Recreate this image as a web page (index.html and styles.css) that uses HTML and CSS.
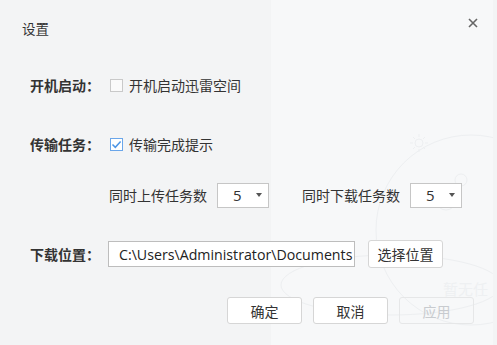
FILE: index.html
```html
<!DOCTYPE html>
<html lang="zh-CN">
<head>
<meta charset="utf-8">
<title>设置</title>
<link rel="stylesheet" href="styles.css">
</head>
<body>
<div class="dialog">
  <div class="backdrop" aria-hidden="true">
    <svg width="222" height="345" viewBox="0 0 222 345">
      <g fill="none" stroke="#edeff1" stroke-width="1">
        <g transform="translate(148 143)">
          <circle r="4"/>
          <path d="M0 -9V-6M0 6V9M-9 0H-6M6 0H9M-6 -6L-4 -4M4 4L6 6M-6 6L-4 4M4 -4L6 -6"/>
        </g>
        <circle cx="200" cy="230" r="95"/>
        <circle cx="175" cy="200" r="10"/>
        <circle cx="190" cy="180" r="6"/>
        <ellipse cx="120" cy="285" rx="110" ry="30"/>
      </g>
    </svg>
    <span class="ghost">暂无任</span>
  </div>

  <header class="titlebar">
    <span class="title">设置</span>
    <button class="close" aria-label="关闭">
      <svg width="10" height="10" viewBox="0 0 10 10"><path d="M1 1L9 9M9 1L1 9" stroke="#666" stroke-width="1.6" fill="none"/></svg>
    </button>
  </header>

  <div class="form">
    <div class="row row-boot">
      <span class="label">开机启动：</span>
      <label class="check"><span class="box"></span><span>开机启动迅雷空间</span></label>
    </div>

    <div class="row row-transfer">
      <span class="label">传输任务：</span>
      <label class="check"><span class="box checked"><svg width="11" height="11" viewBox="0 0 11 11"><path d="M1.5 5.5L4.3 8.3L9.6 2.4" stroke="#4d96e6" stroke-width="1.5" fill="none"/></svg></span><span>传输完成提示</span></label>
    </div>

    <div class="row row-count">
      <span class="sub">同时上传任务数</span>
      <span class="select"><span class="val">5</span><span class="arrow"></span></span>
      <span class="sub sub-2">同时下载任务数</span>
      <span class="select"><span class="val">5</span><span class="arrow"></span></span>
    </div>

    <div class="row row-path">
      <span class="label label-path">下载位置：</span>
      <span class="input">C:\Users\Administrator\Documents</span>
      <button class="btn btn-choose">选择位置</button>
    </div>

    <div class="actions">
      <button class="btn">确定</button>
      <button class="btn">取消</button>
      <button class="btn disabled">应用</button>
    </div>
  </div>
</div>
</body>
</html>
```

FILE: styles.css
```css
* { box-sizing: border-box; }
html, body { margin: 0; padding: 0; }
body {
  width: 497px;
  height: 345px;
  overflow: hidden;
  background: #f3f4f5;
  font-family: "Noto Sans CJK SC", "Noto Sans", sans-serif;
  font-size: 14px;
  color: #333;
}
.dialog {
  position: relative;
  width: 497px;
  height: 345px;
}
.backdrop {
  position: absolute;
  left: 271px;
  top: 0;
  width: 222px;
  height: 345px;
  background: #f7f8f9;
  overflow: hidden;
}
.backdrop svg { position: absolute; left: 0; top: 0; }
.ghost {
  position: absolute;
  left: 172px;
  top: 279px;
  font-size: 15px;
  line-height: 20px;
  color: #eef0f2;
  white-space: nowrap;
}
.titlebar {
  position: relative;
  height: 56px;
  display: flex;
  align-items: center;
  justify-content: space-between;
  padding: 0 16px 0 22px;
}
.title { font-size: 13.5px; line-height: 20px; color: #333; }
.close {
  border: 0;
  background: transparent;
  padding: 0;
  width: 16px;
  height: 16px;
  display: flex;
  align-items: center;
  justify-content: center;
  margin-top: -10px;
}
.form {
  position: relative;
  display: flex;
  flex-direction: column;
  padding-left: 30px;
}
.row {
  display: flex;
  align-items: center;
  height: 26px;
}
.row-boot { margin-top: 16px; }
.row-transfer { margin-top: 33px; }
.row-count { margin-top: 25px; padding-left: 79px; }
.row-path { margin-top: 33px; }
.label {
  width: 80px;
  font-weight: bold;
  color: #333;
  line-height: 20px;
}
.label-path { width: 78px; }
.check {
  display: flex;
  align-items: center;
  gap: 6px;
  line-height: 20px;
}
.box {
  width: 13px;
  height: 13px;
  border: 1px solid #c9c9c9;
  background: #fafafa;
  display: flex;
  align-items: center;
  justify-content: center;
}
.box.checked { border-color: #6aa6ea; background: #fff; }
.sub { line-height: 20px; }
.sub-2 { margin-left: 33px; }
.select {
  margin-left: 10px;
  width: 52px;
  height: 25px;
  border: 1px solid #c6c6c6;
  background: #fff;
  display: flex;
  align-items: center;
  padding-left: 15px;
  padding-right: 6px;
}
.val { flex: 1; font-size: 15px; line-height: 20px; font-family: "Open Sans", "Noto Sans", sans-serif; }
.arrow {
  width: 0;
  height: 0;
  border-left: 3.5px solid transparent;
  border-right: 3.5px solid transparent;
  border-top: 4px solid #555;
}
.input {
  width: 247px;
  height: 26px;
  border: 1px solid #bdbdbd;
  background: #fff;
  padding-left: 10px;
  display: flex;
  align-items: center;
  font-family: "Open Sans", "Noto Sans", sans-serif;
  font-size: 14.2px;
  color: #222;
  white-space: nowrap;
  overflow: hidden;
}
.btn {
  width: 75px;
  height: 27px;
  border: 1px solid #d6d6d6;
  border-radius: 3px;
  background: #fff;
  font-family: "Noto Sans CJK SC", sans-serif;
  font-size: 14px;
  color: #333;
  padding: 0;
}
.btn-choose { margin-left: 13px; height: 28px; }
.actions {
  display: flex;
  gap: 11px;
  margin-top: 30px;
  padding-left: 197px;
}
.btn.disabled {
  background: transparent;
  border-color: #e6e7e8;
  color: #c8cbcf;
}
```
